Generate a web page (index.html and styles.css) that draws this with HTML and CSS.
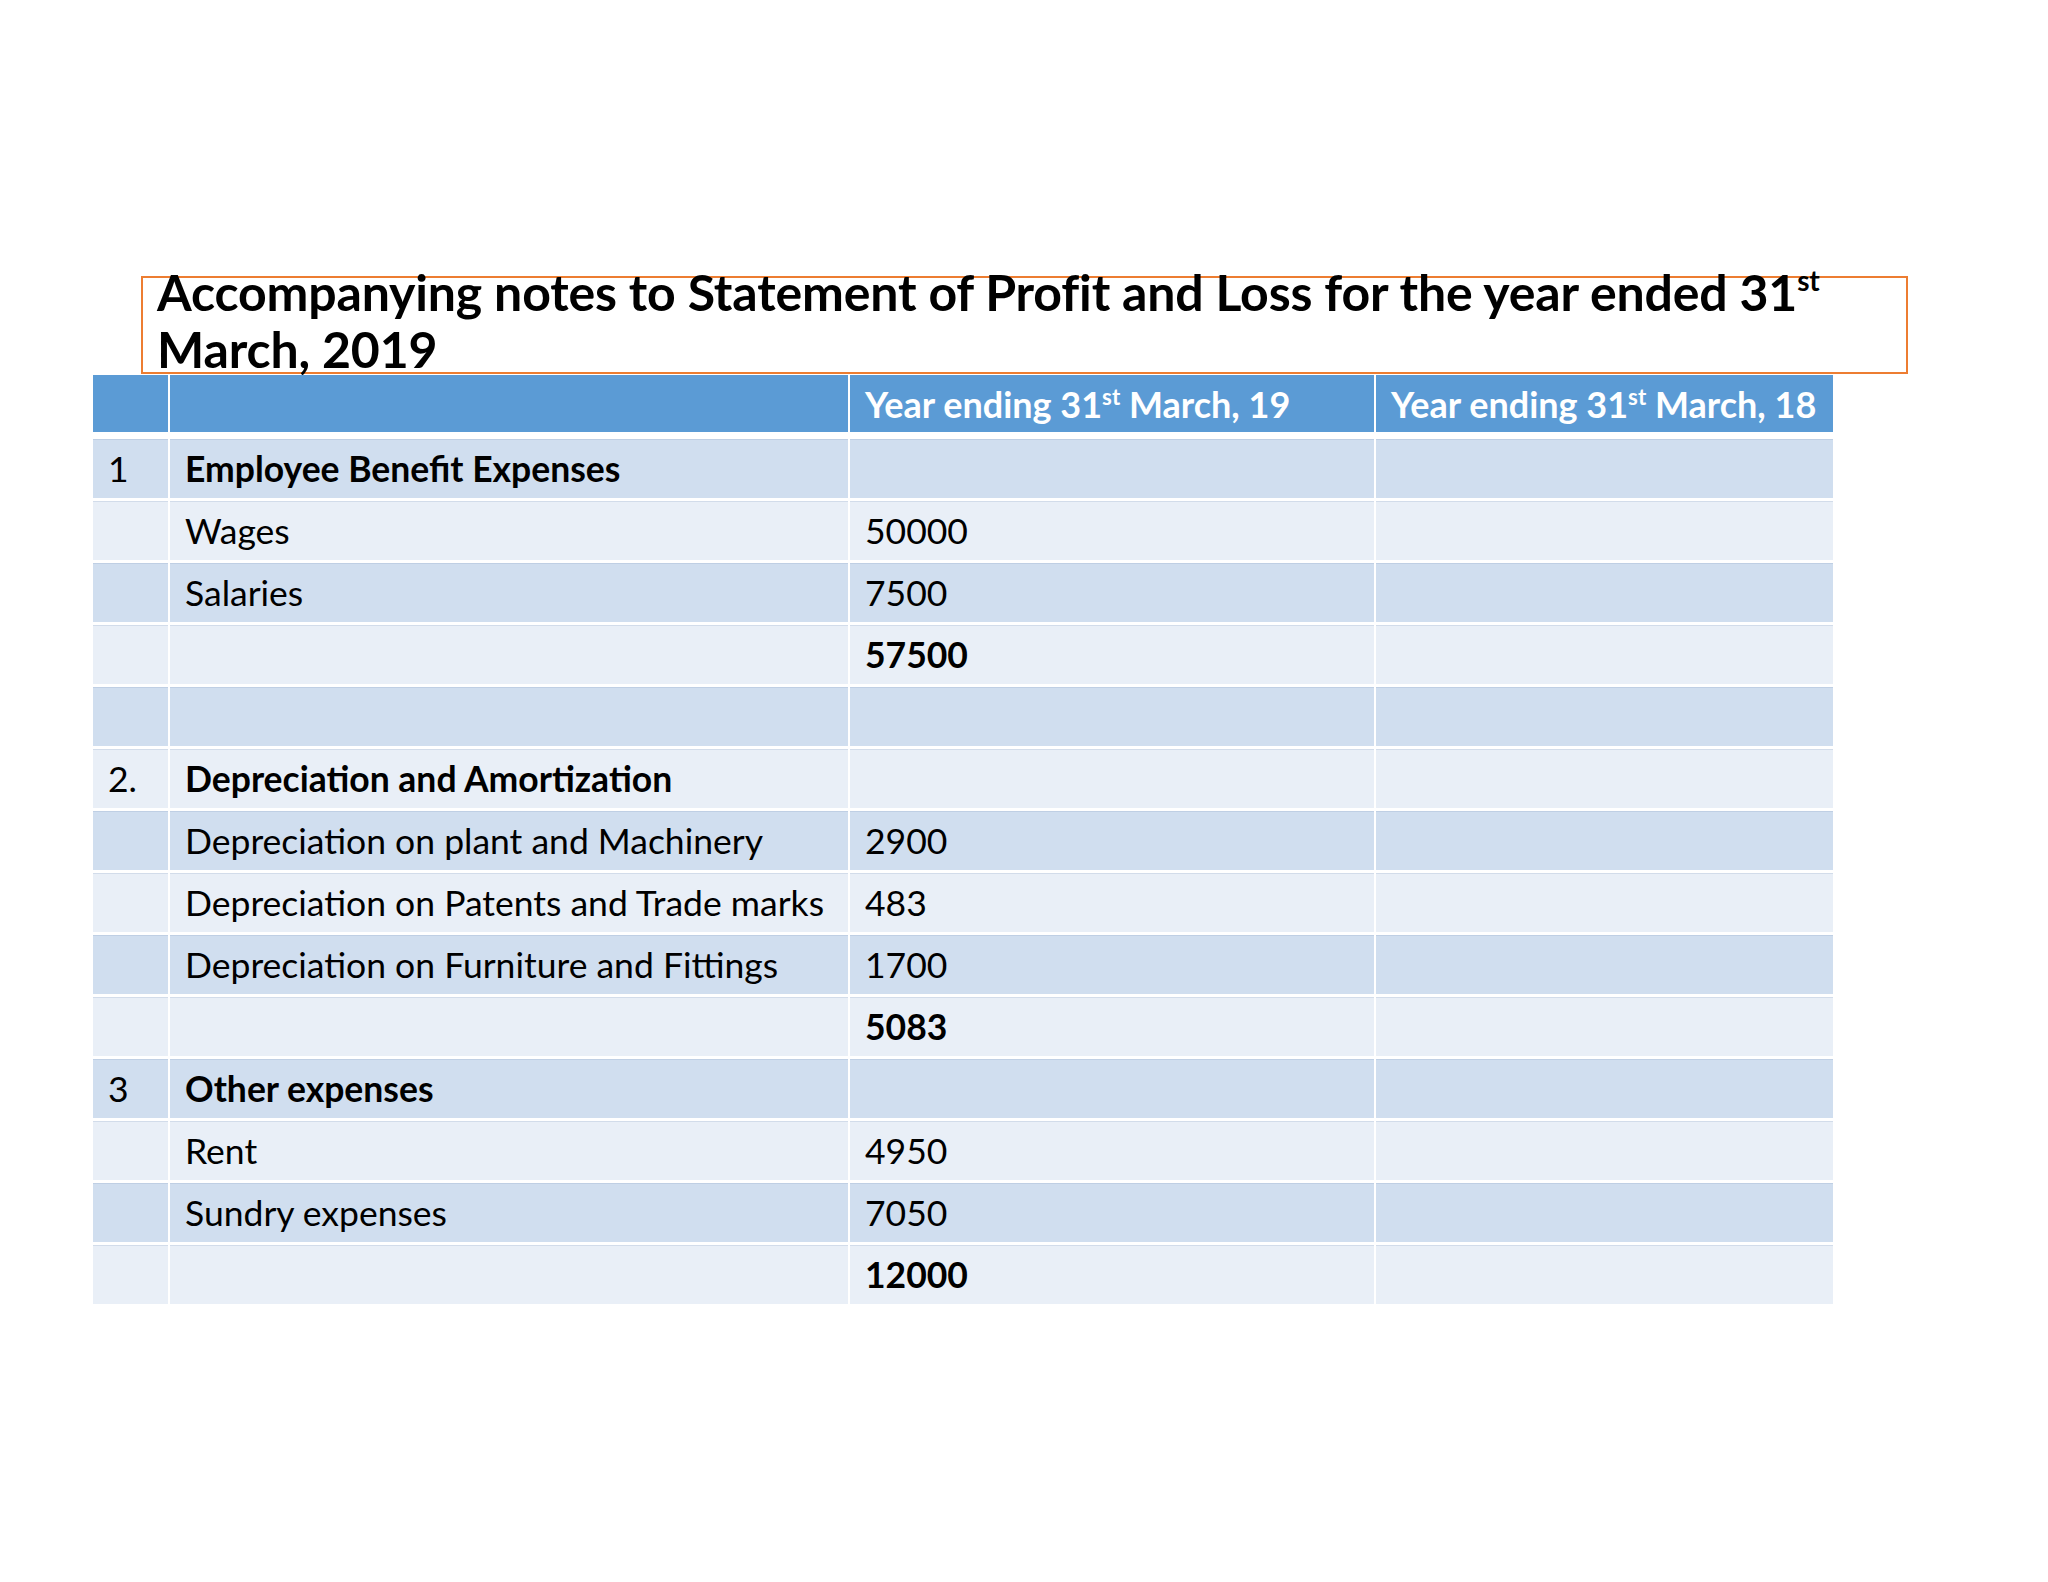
FILE: index.html
```html
<!DOCTYPE html>
<html lang="en">
<head>
<meta charset="utf-8">
<title>Accompanying notes to Statement of Profit and Loss</title>
<link rel="stylesheet" href="styles.css">
</head>
<body>
<div class="slide">
  <div class="title-box">
    <h1 class="title">Accompanying notes to Statement of Profit and Loss for the year ended 31<sup>st</sup><br>March, 2019</h1>
  </div>
  <div class="notes">
    <div class="row head">
      <div class="cell"></div>
      <div class="cell"></div>
      <div class="cell"><span>Year ending 31<sup>st</sup> March, 19</span></div>
      <div class="cell"><span>Year ending 31<sup>st</sup> March, 18</span></div>
    </div>
    <div class="body">
      <div class="row dark"><div class="cell">1</div><div class="cell b">Employee Benefit Expenses</div><div class="cell"></div><div class="cell"></div></div>
      <div class="row light"><div class="cell"></div><div class="cell">Wages</div><div class="cell">50000</div><div class="cell"></div></div>
      <div class="row dark"><div class="cell"></div><div class="cell">Salaries</div><div class="cell">7500</div><div class="cell"></div></div>
      <div class="row light"><div class="cell"></div><div class="cell"></div><div class="cell b">57500</div><div class="cell"></div></div>
      <div class="row dark"><div class="cell"></div><div class="cell"></div><div class="cell"></div><div class="cell"></div></div>
      <div class="row light"><div class="cell">2.</div><div class="cell b">Depreciation and Amortization</div><div class="cell"></div><div class="cell"></div></div>
      <div class="row dark"><div class="cell"></div><div class="cell">Depreciation on plant and Machinery</div><div class="cell">2900</div><div class="cell"></div></div>
      <div class="row light"><div class="cell"></div><div class="cell">Depreciation on Patents and Trade marks</div><div class="cell">483</div><div class="cell"></div></div>
      <div class="row dark"><div class="cell"></div><div class="cell">Depreciation on Furniture and Fittings</div><div class="cell">1700</div><div class="cell"></div></div>
      <div class="row light"><div class="cell"></div><div class="cell"></div><div class="cell b">5083</div><div class="cell"></div></div>
      <div class="row dark"><div class="cell">3</div><div class="cell b">Other expenses</div><div class="cell"></div><div class="cell"></div></div>
      <div class="row light"><div class="cell"></div><div class="cell">Rent</div><div class="cell">4950</div><div class="cell"></div></div>
      <div class="row dark"><div class="cell"></div><div class="cell">Sundry expenses</div><div class="cell">7050</div><div class="cell"></div></div>
      <div class="row light"><div class="cell"></div><div class="cell"></div><div class="cell b">12000</div><div class="cell"></div></div>
    </div>
  </div>
</div>
</body>
</html>
```
FILE: styles.css
```css
html, body {
  margin: 0;
  padding: 0;
  background: #ffffff;
}
body {
  font-family: "Lato", "Liberation Sans", sans-serif;
  color: #000000;
}
.slide {
  width: 2048px;
  height: 1582px;
  padding-top: 276px;
  box-sizing: border-box;
  display: flex;
  flex-direction: column;
  align-items: flex-start;
}
.title-box {
  margin-left: 141px;
  width: 1767px;
  height: 98px;
  box-sizing: border-box;
  border: 2px solid #ed7d31;
  padding-left: 14px;
}
.title {
  margin: -14px 0 0 0;
  font-size: 50px;
  line-height: 57px;
  font-weight: 700;
  letter-spacing: -0.15px;
  white-space: nowrap;
}
.title sup {
  font-size: 0.56em;
  line-height: 0;
  vertical-align: 0.72em;
}
.notes {
  margin-left: 93px;
  margin-top: 1px;
  width: 1740px;
  display: flex;
  flex-direction: column;
  row-gap: 7px;
}
.body {
  display: flex;
  flex-direction: column;
  row-gap: 3px;
}
.row {
  display: grid;
  grid-template-columns: 75px 678px 524px 457px;
  column-gap: 2px;
  height: 59px;
}
.head {
  height: 57px;
}
.cell {
  display: flex;
  align-items: center;
  padding-left: 15px;
  font-size: 35.5px;
  white-space: nowrap;
}
.head .cell {
  background: #5b9bd5;
  color: #ffffff;
  font-weight: 700;
  font-size: 36px;
}
.head sup {
  font-size: 0.62em;
  line-height: 0;
  vertical-align: 0.6em;
}
.dark .cell {
  background: #d0deef;
  box-shadow: inset 0 1px 0 rgba(160, 180, 210, 0.35);
}
.light .cell {
  background: #e9eff7;
  box-shadow: inset 0 1px 0 rgba(170, 185, 210, 0.35);
}
.b {
  font-weight: 700;
}
```
